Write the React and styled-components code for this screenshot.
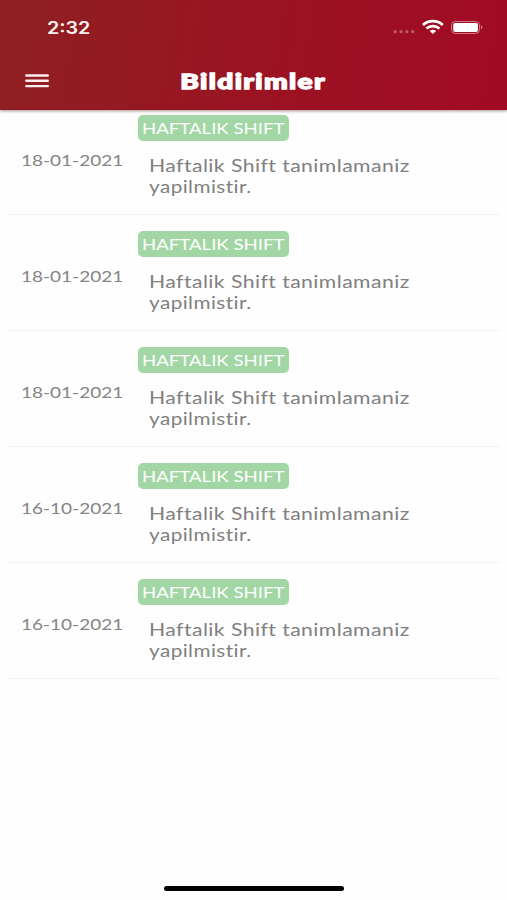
import React from "react";
import styled, { createGlobalStyle } from "styled-components";

const GlobalStyle = createGlobalStyle`
  * { box-sizing: border-box; }
  body { margin: 0; background: #fefefe; font-family: Lato, "Open Sans", sans-serif; }
`;

const Screen = styled.div`
  height: 900px;
  width: 100%;
  display: flex;
  flex-direction: column;
  overflow: hidden;
  background: #fefefe;
`;

const Header = styled.header`
  height: 110px;
  flex: none;
  z-index: 1;
  color: #fff;
  background: linear-gradient(100deg, #8f2022 0%, #991422 48%, #a30a24 100%);
  box-shadow: 0 1px 3px rgba(60, 0, 0, 0.45);
`;

const StatusBar = styled.div`
  height: 54px;
  padding: 0 24px 0 47px;
  display: flex;
  align-items: center;
  justify-content: space-between;
`;

const Clock = styled.time`
  padding-top: 1px;
  font: 600 17px/20px Inter, sans-serif;
  transform: scaleX(1.16);
  transform-origin: left;
  color: #fff4f2;
`;

const StatusIcons = styled.svg`
  display: block;
  width: 92px;
  height: 20px;
`;

const NavBar = styled.div`
  height: 54px;
  padding: 0 25px;
  display: grid;
  grid-template-columns: 24px 1fr 24px;
  align-items: center;
`;

const MenuButton = styled.button`
  padding: 0;
  border: 0;
  background: none;
`;

const MenuIcon = styled.svg`
  display: block;
  width: 24px;
  height: 14px;
`;

const Title = styled.h1`
  margin: 0;
  justify-self: center;
  font-size: 20.5px;
  line-height: 26px;
  font-weight: 900;
  letter-spacing: 1px;
  -webkit-text-stroke: 1.3px #fff;
  stroke-linejoin: round;
  transform: scaleX(1.37);
`;

const List = styled.ul`
  list-style: none;
  margin: -11.5px 6px 0 7px;
  padding: 0;
`;

const Row = styled.li`
  height: 116.1px;
  padding: 16.5px 0 0 14px;
  display: grid;
  grid-template-columns: 117px 1fr;
  border-bottom: 1px solid #f3f3f3;
`;

const Stretched = styled.span`
  display: block;
  width: max-content;
  transform: scaleX(${(p) => p.$stretch});
  transform-origin: left;
`;

const DateCell = styled.time`
  padding-top: 35px;
  font-size: 15.5px;
  line-height: 20px;
  color: #858585;
`;

const Badge = styled.div`
  width: 151px;
  height: 26px;
  padding-left: 4px;
  border-radius: 5px;
  background: #a2d6a4;
  color: #fff;
  font-size: 15.5px;
  line-height: 26px;
`;

const Message = styled.div`
  padding: 14px 0 0 11px;
  font-size: 17px;
  line-height: 21px;
  letter-spacing: 0.35px;
  font-variant-ligatures: none;
  color: #808080;
`;

const HomeIndicator = styled.div`
  width: 180px;
  height: 5px;
  margin: auto auto 9px 164px;
  flex: none;
  border-radius: 3px;
  background: #000;
`;

const dates = ["18-01-2021", "18-01-2021", "18-01-2021", "16-10-2021", "16-10-2021"];

const Notification = ({ date }) => (
  <Row>
    <DateCell><Stretched $stretch={1.225}>{date}</Stretched></DateCell>
    <div>
      <Badge><Stretched $stretch={1.2}>HAFTALIK SHIFT</Stretched></Badge>
      <Message>
        <Stretched $stretch={1.245}>Haftalik Shift tanimlamaniz</Stretched>
        <Stretched $stretch={1.22}>yapilmistir.</Stretched>
      </Message>
    </div>
  </Row>
);

export default function App() {
  return (
    <Screen>
      <GlobalStyle />
      <Header>
        <StatusBar>
          <Clock>2:32</Clock>
          <StatusIcons viewBox="0 0 92 20" fill="none">
            <g fill="#fff" fillOpacity=".33">
              <circle cx="4.2" cy="14.7" r="1.6" />
              <circle cx="10" cy="14.7" r="1.6" />
              <circle cx="15.9" cy="14.7" r="1.6" />
              <circle cx="21.7" cy="14.7" r="1.6" />
            </g>
            <g stroke="#fff" strokeWidth="2.7">
              <path d="M32 7.9C37.5 2.8 46.3 2.8 51.8 7.9" />
              <path d="M35.4 11.5C39.1 8.2 44.7 8.2 48.4 11.5" />
            </g>
            <path d="M38.7 14C40.5 12.3 43.3 12.3 45.1 14L41.9 16.9Z" fill="#fff" />
            <rect x="60.5" y="4.5" width="28" height="12" rx="3.8" stroke="#fff" strokeOpacity=".45" />
            <rect x="62.2" y="6.1" width="24.8" height="8.8" rx="2" fill="#fff" />
            <path d="M90 8.3Q92.8 10.3 90 12.3Z" fill="#fff" fillOpacity=".5" />
          </StatusIcons>
        </StatusBar>
        <NavBar>
          <MenuButton aria-label="Menu">
            <MenuIcon viewBox="0 0 24 14" stroke="#ffeceb" strokeWidth="2.4" strokeLinecap="round">
              <path d="M1.3 1.5H22.8M1.3 6.8H22.8M1.3 12.1H22.8" />
            </MenuIcon>
          </MenuButton>
          <Title>Bildirimler</Title>
        </NavBar>
      </Header>
      <List>
        {dates.map((date, i) => <Notification key={i} date={date} />)}
      </List>
      <HomeIndicator />
    </Screen>
  );
}
